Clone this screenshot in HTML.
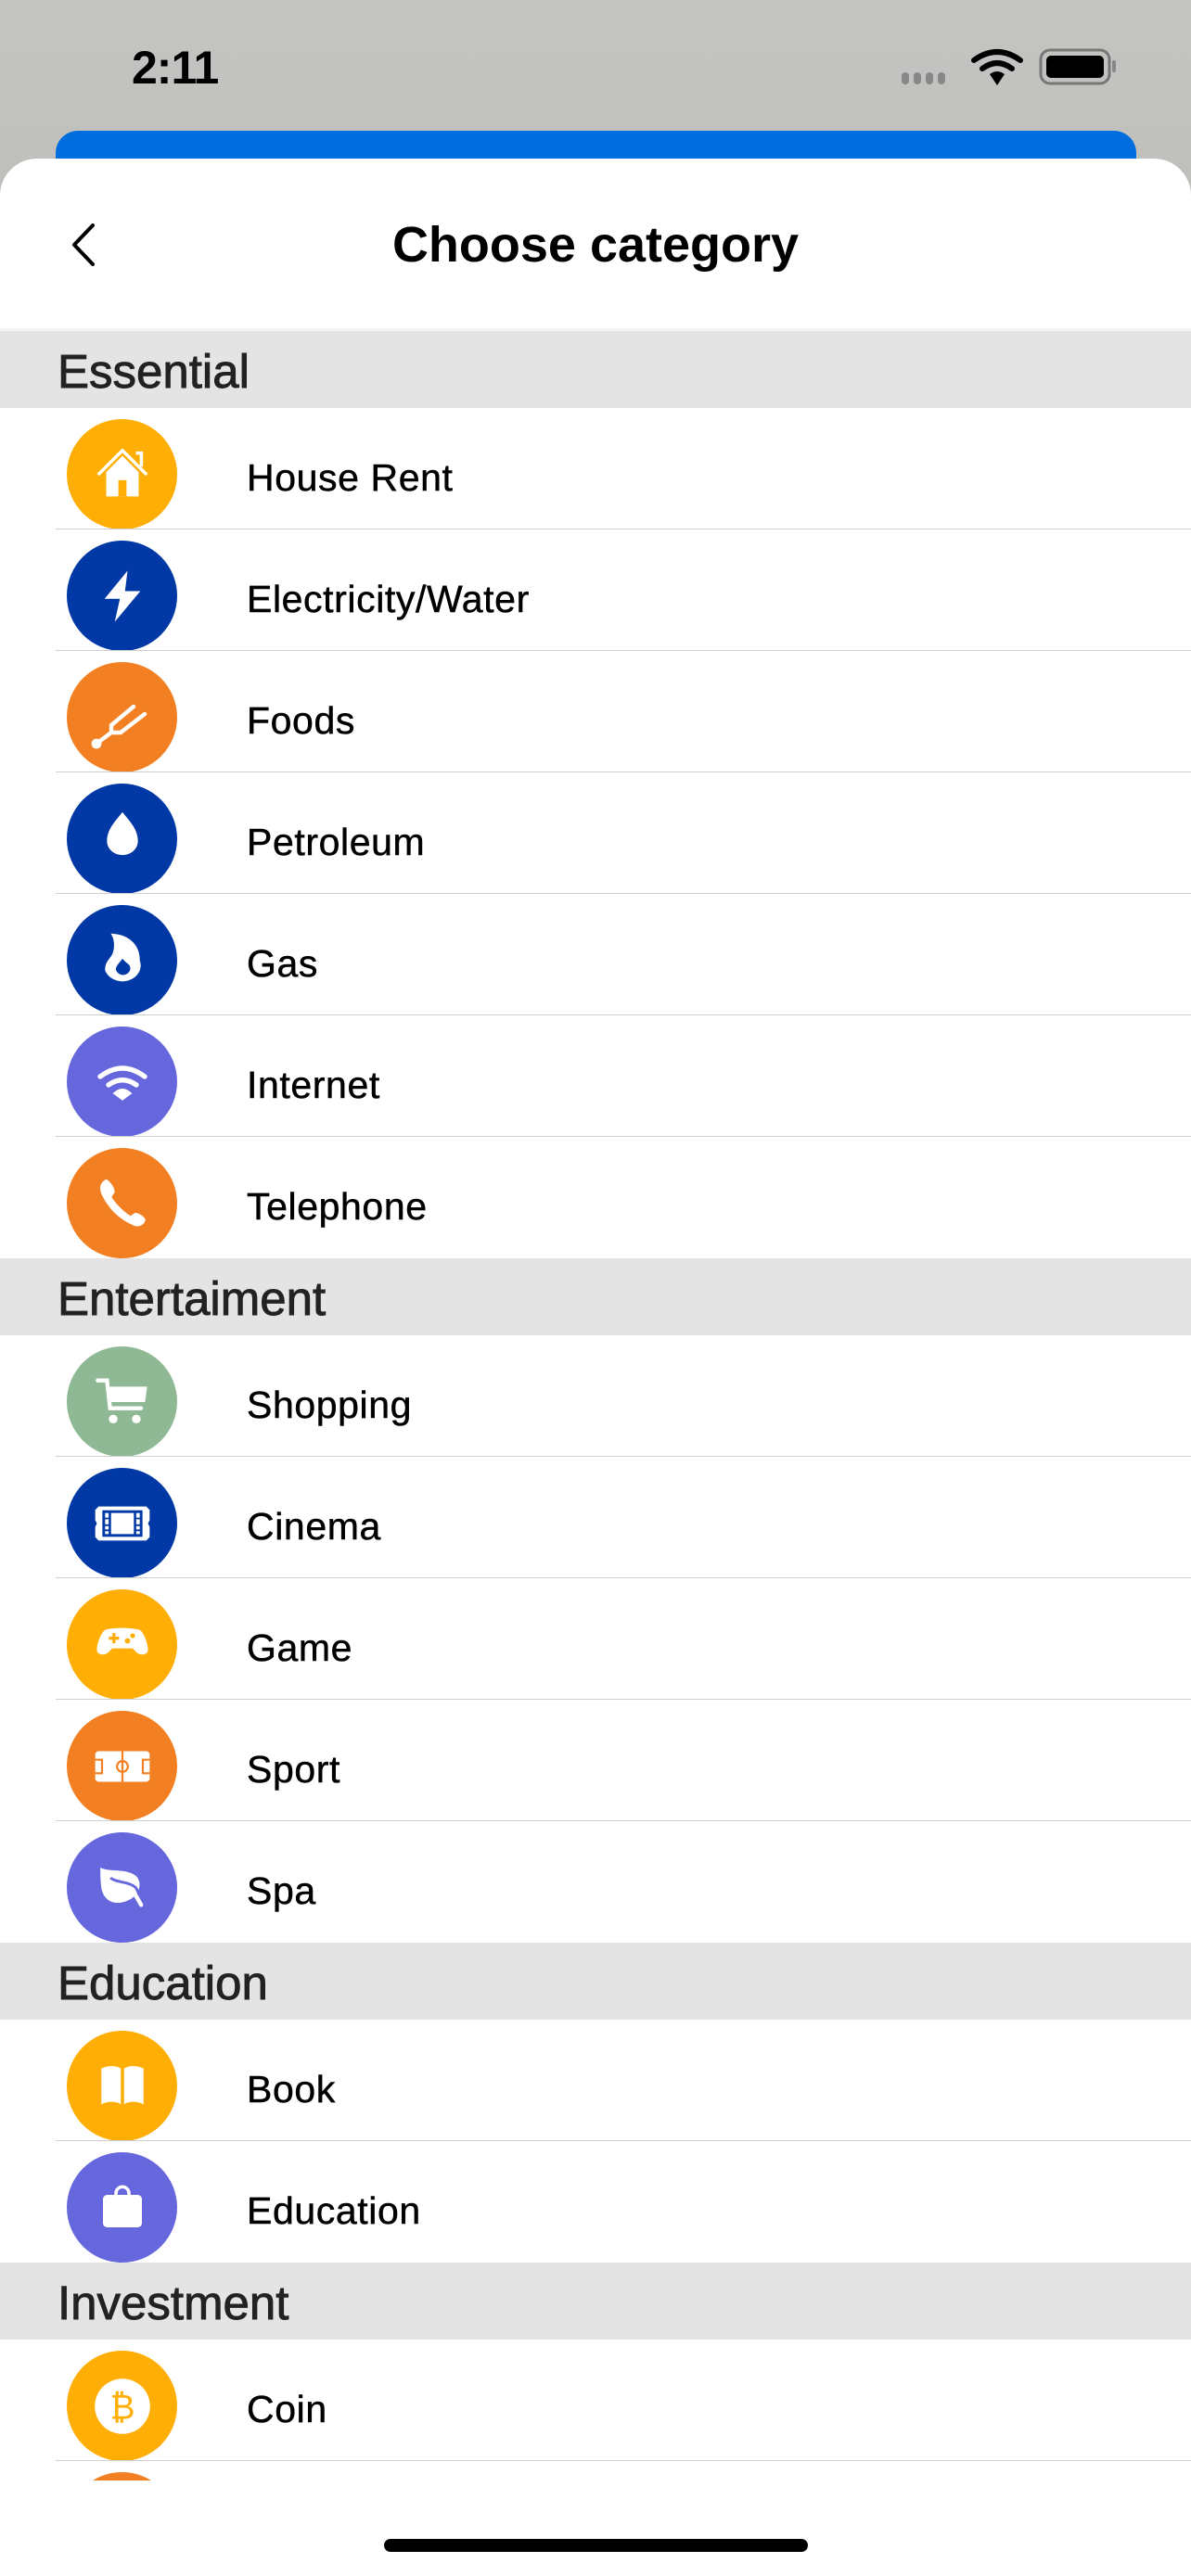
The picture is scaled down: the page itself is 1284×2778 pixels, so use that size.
<!DOCTYPE html>
<html><head><meta charset="utf-8"><style>
*{margin:0;padding:0;box-sizing:border-box}
body{width:1284px;height:2778px;background:#c2c3c0;position:relative;overflow:hidden;font-family:"Liberation Sans",sans-serif}
.bg{position:absolute;left:0;top:0;width:1284px;height:300px;background:linear-gradient(#c4c5c2,#bcbdb9)}
.time{position:absolute;left:142px;top:44px;font-size:50px;font-weight:bold;color:#000;letter-spacing:-1px}
.blue{position:absolute;left:60px;top:141px;width:1165px;height:80px;background:#006ddf;border-radius:24px 24px 0 0}
.sheet{position:absolute;left:0;top:171px;width:1284px;height:2607px;background:#fff;border-radius:40px 40px 0 0;overflow:hidden}
.title{position:absolute;left:0;width:1284px;top:62px;text-align:center;font-size:54px;font-weight:bold;color:#000}
.back{position:absolute;left:74px;top:70px}
.list{position:absolute;left:0;top:183px;width:1284px;height:2321px;overflow:hidden;border-top:3px solid #f2f2f2}
.hdr{height:83px;background:#e4e4e4;font-size:51px;color:#222;padding-left:62px;line-height:88px;-webkit-text-stroke:0.9px #222}
.row{height:131px;position:relative}
.row .ic{position:absolute;left:72px;top:12px;width:119px;height:119px;border-radius:50%;display:flex;align-items:center;justify-content:center;overflow:hidden}
.row .ic svg{flex:none}
.row .t{position:absolute;left:266px;top:10px;line-height:130px;font-size:41px;color:#000;letter-spacing:0.6px;-webkit-text-stroke:0.5px #000}
.row::after{content:"";position:absolute;left:60px;right:0;bottom:0;height:1px;background:#cfcfcf}
.row.last::after{display:none}
.y{background:#ffae05}.b{background:#0039a6}.o{background:#f27f21}.p{background:#6767dd}.g{background:#8fb994}
.home{position:absolute;left:414px;top:2738px;width:457px;height:14px;border-radius:7px;background:#000}
</style></head><body>
<div class="bg"></div>
<div class="time">2:11</div>
<svg style="position:absolute;left:970px;top:50px" width="240" height="45" viewBox="0 0 240 45">
<g fill="#888"><rect x="2" y="28" width="8" height="13" rx="4"/><rect x="15" y="28" width="8" height="13" rx="4"/><rect x="28" y="28" width="8" height="13" rx="4"/><rect x="41" y="28" width="8" height="13" rx="4"/></g>
<g fill="none" stroke="#000" stroke-width="6" stroke-linecap="round"><path d="M80 15 Q105 -3 130 15"/><path d="M89 24 Q105 12 121 24"/></g>
<path d="M97 30 L105 42 L113 30 Q105 24 97 30Z" fill="#000"/>
<rect x="152" y="4" width="74" height="36" rx="10" fill="none" stroke="#777" stroke-width="3"/>
<rect x="158" y="10" width="62" height="24" rx="5" fill="#000"/>
<rect x="229" y="15" width="4" height="13" rx="2" fill="#888"/>
</svg>
<div class="blue"></div>
<div class="sheet">
<svg class="back" width="30" height="46" viewBox="0 0 30 46"><path d="M26 2 L6 23 L26 44" fill="none" stroke="#000" stroke-width="4" stroke-linecap="round" stroke-linejoin="round"/></svg>
<div class="title">Choose category</div>
<div class="list">
<div class="hdr">Essential</div>
<div class="row"><div class="ic y"><svg width="70" height="70" viewBox="0 0 24 24"><path d="M3 12 L12 3 L21 12" fill="none" stroke="#fff" stroke-width="1.2" stroke-linejoin="round"/><path d="M17 4h2v5" fill="none" stroke="#fff" stroke-width="1.2"/><path d="M6 11 L12 5 L18 11 V20 H6Z" fill="#fff"/><rect x="10.5" y="14" width="3" height="6" fill="#ffae05"/></svg></div><div class="t">House Rent</div></div>
<div class="row"><div class="ic b"><svg width="66" height="66" viewBox="0 0 24 24"><path d="M14 2 L5 13 H11 L9 22 L19 10 H13 Z" fill="#fff"/></svg></div><div class="t">Electricity/Water</div></div>
<div class="row"><div class="ic o"><svg width="96" height="96" viewBox="0 0 24 24" fill="none" stroke="#fff" stroke-width="1.1" stroke-linecap="round"><path d="M5 19 L9 16 H11.5 L18 11"/><path d="M9 16 V14 L15 9"/><circle cx="5" cy="19" r="0.8" fill="#fff"/></svg></div><div class="t">Foods</div></div>
<div class="row"><div class="ic b"><svg width="100" height="100" viewBox="0 0 24 24"><path d="M12 5 C10 7.5 8 9.5 8 12.5 A4 3.6 0 0 0 16 12.5 C16 9.5 14 7.5 12 5Z" fill="#fff"/></svg></div><div class="t">Petroleum</div></div>
<div class="row"><div class="ic b"><svg width="100" height="100" viewBox="0 0 24 24"><path d="M9 5 C11 5 16.5 6 16.5 12 A4.6 4 0 0 1 7.5 14.5 C7.5 12 9 11.5 9.5 10 C10 8.5 10 6.5 9 5Z" fill="#fff"/><path d="M12 11.5 L13 12.5 C14 13 14.3 14 13.8 14.8 A1.9 1.8 0 0 1 10.3 14.3 C10.3 13.3 11.3 12.5 12 11.5Z" fill="#0039a6"/></svg></div><div class="t">Gas</div></div>
<div class="row"><div class="ic p"><svg width="72" height="72" viewBox="0 0 24 24" fill="none" stroke="#fff" stroke-width="1.8" stroke-linecap="round"><path d="M4 10 Q12 4 20 10"/><path d="M7 13 Q12 9.5 17 13"/><path d="M10 16 L12 17.5 L14 16 Q12 14.5 10 16Z" fill="#fff"/></svg></div><div class="t">Internet</div></div>
<div class="row last"><div class="ic o"><svg width="70" height="70" viewBox="0 0 24 24"><path d="M6 3 C4 4 3 6 4.5 9 C7 14 11 18 16 20 C18 21 20 20 20.5 18 C20.5 17 17.5 15 16.5 15.5 L15 16.5 C13 15.5 9 11.5 8 9.5 L9 8 C9.5 7 8 4 6 3Z" fill="#fff"/></svg></div><div class="t">Telephone</div></div>
<div class="hdr">Entertaiment</div>
<div class="row"><div class="ic g"><svg width="80" height="80" viewBox="0 0 24 24"><path d="M4 5 H7 L8 14 H18" fill="none" stroke="#fff" stroke-width="1.3" stroke-linecap="round"/><path d="M7.3 7 H20 L19.3 12 H7.8Z" fill="#fff"/><circle cx="9" cy="17.5" r="1.4" fill="#fff"/><circle cx="16.5" cy="17.5" r="1.4" fill="#fff"/></svg></div><div class="t">Shopping</div></div>
<div class="row"><div class="ic b"><svg width="88" height="88" viewBox="0 0 24 24"><path d="M5 7 H19 L20 8 V11 L19.5 12 L20 13 V16 L19 17 H5 L4 16 V13 L4.5 12 L4 11 V8Z" fill="#fff"/><rect x="6.5" y="8.5" width="11" height="7" fill="none" stroke="#0039a6" stroke-width="0.8"/><path d="M8.3 8.5 V15.5 M15.7 8.5 V15.5" stroke="#0039a6" stroke-width="0.7"/><path d="M6.5 10.5h1.8M6.5 12.5h1.8M6.5 14h1.8M15.7 10.5h1.8M15.7 12.5h1.8M15.7 14h1.8" stroke="#0039a6" stroke-width="0.5"/></svg></div><div class="t">Cinema</div></div>
<div class="row"><div class="ic y"><svg width="88" height="88" viewBox="0 0 24 24"><path d="M7 7.5 C10 6.8 14 6.8 17 7.5 C18 8 19.5 11 19.5 13.5 C19.5 15 17 15.2 16 14 L15 13 H9 L8 14 C7 15.2 4.5 15 4.5 13.5 C4.5 11 6 8 7 7.5Z" fill="#fff"/><path d="M8 10 h3 M9.5 8.5 v3" stroke="#ffae05" stroke-width="0.9"/><circle cx="13.5" cy="10.8" r="0.8" fill="#ffae05"/><circle cx="15" cy="9.3" r="0.7" fill="#ffae05"/></svg></div><div class="t">Game</div></div>
<div class="row"><div class="ic o"><svg width="88" height="88" viewBox="0 0 24 24"><rect x="4" y="7.5" width="16" height="9" rx="1" fill="#fff"/><path d="M12 7.5 V16.5 M4 10 H6 V14 H4 M20 10 H18 V14 H20" fill="none" stroke="#f27f21" stroke-width="0.6"/><circle cx="12" cy="12" r="1.6" fill="none" stroke="#f27f21" stroke-width="0.6"/></svg></div><div class="t">Sport</div></div>
<div class="row last"><div class="ic p"><svg width="88" height="88" viewBox="0 0 24 24"><path d="M5.5 6 C8 7.5 13 6 16 8.5 C18 10.5 17 14 14 15.5 C10 17.5 6.5 16 5.8 12 C5.5 10 5.5 7.5 5.5 6Z" fill="#fff"/><path d="M8.5 9 C10 10.5 14 10 16 12 L18 16" fill="none" stroke="#6767dd" stroke-width="0.8"/><path d="M15.5 13.5 L17.5 17" stroke="#fff" stroke-width="1.2" stroke-linecap="round"/></svg></div><div class="t">Spa</div></div>
<div class="hdr">Education</div>
<div class="row"><div class="ic y"><svg width="84" height="84" viewBox="0 0 24 24"><path d="M5.5 6.5 C7.5 5.5 10 5.5 11.5 6.5 V17.5 C10 16.5 7.5 16.5 5.5 17.5Z M12.5 6.5 C14 5.5 16.5 5.5 18.5 6.5 V17.5 C16.5 16.5 14 16.5 12.5 17.5Z" fill="#fff"/></svg></div><div class="t">Book</div></div>
<div class="row last"><div class="ic p"><svg width="84" height="84" viewBox="0 0 24 24"><rect x="6" y="8" width="12" height="10" rx="1.3" fill="#fff"/><path d="M10 8.5 V7.5 A2 2 0 0 1 14 7.5 V8.5" fill="none" stroke="#fff" stroke-width="1"/></svg></div><div class="t">Education</div></div>
<div class="hdr">Investment</div>
<div class="row"><div class="ic y"><svg width="110" height="110" viewBox="0 0 24 24"><circle cx="12" cy="12" r="6.5" fill="#fff"/><text x="12" y="15" text-anchor="middle" font-family="Liberation Sans,DejaVu Sans,sans-serif" font-size="8" fill="#ffae05">₿</text></svg></div><div class="t">Coin</div></div>
<div class="row last"><div class="ic o"></div><div class="t"></div></div>
</div>
</div>
<div class="home"></div>
</body></html>
